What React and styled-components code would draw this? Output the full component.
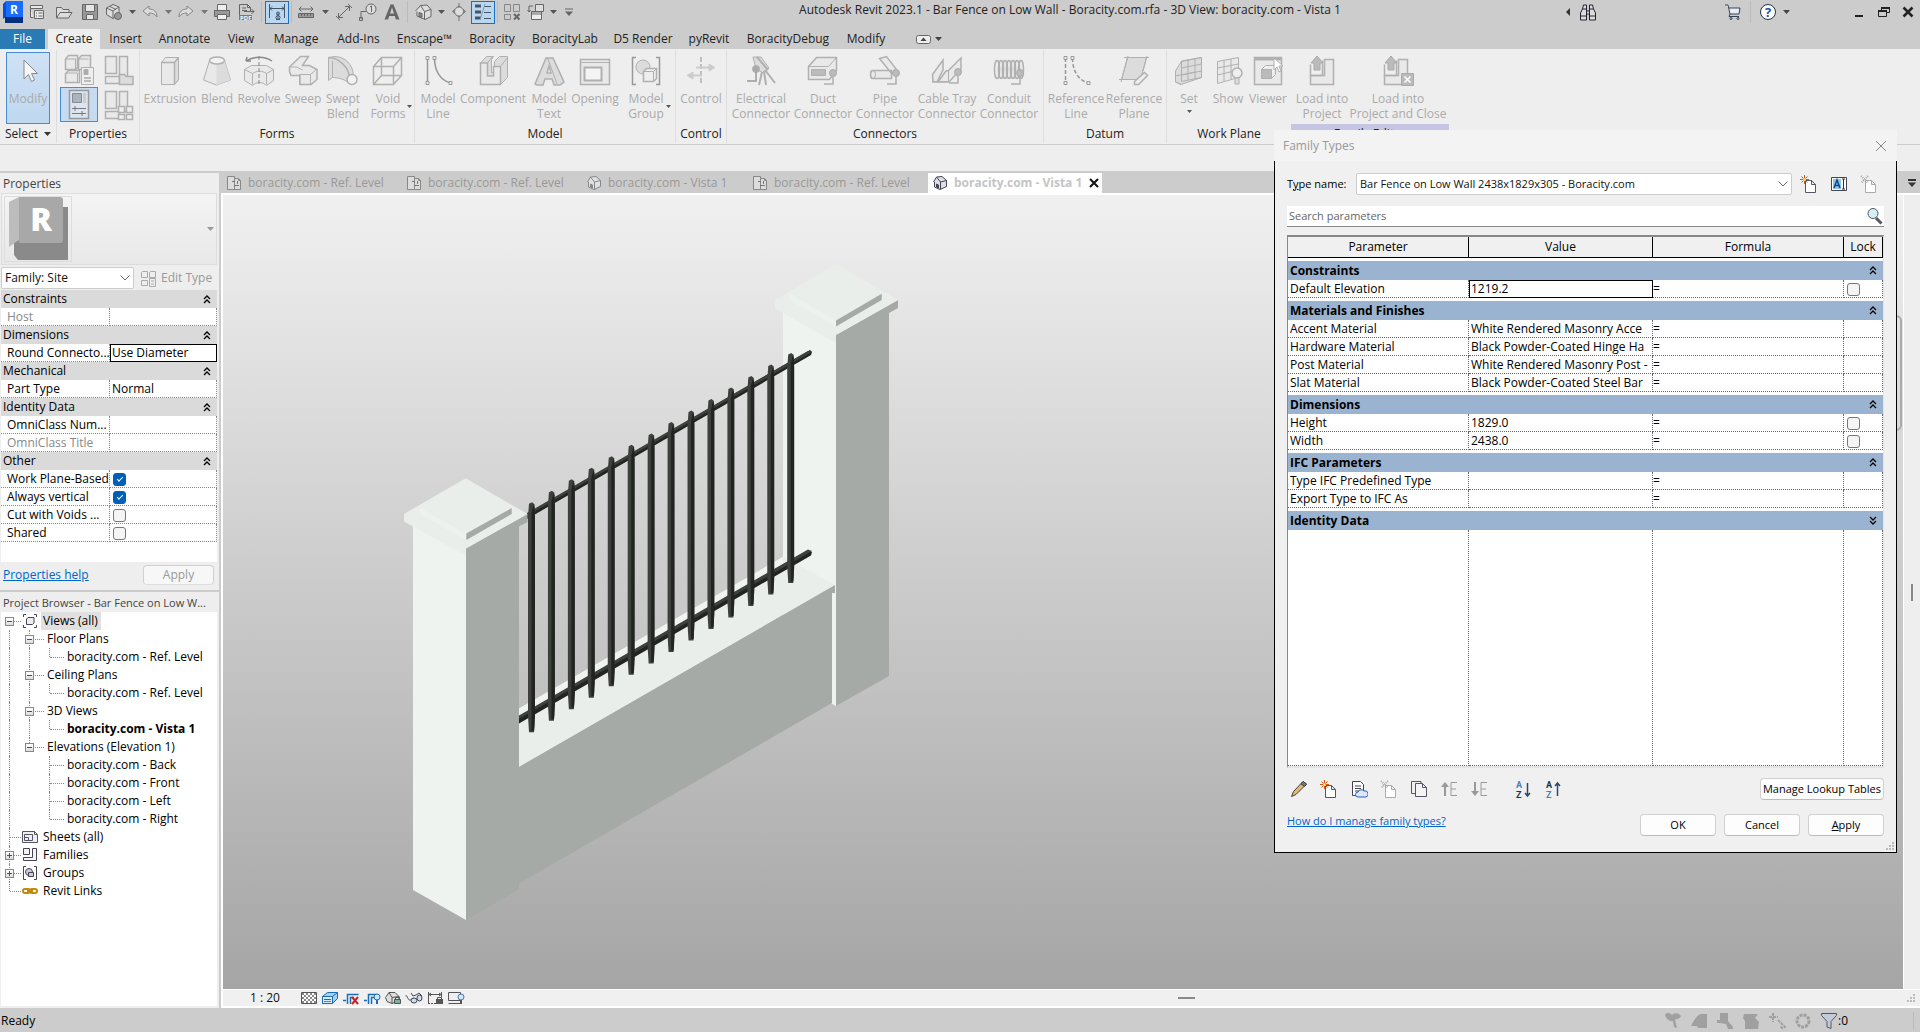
import React from "react";
import styled, { createGlobalStyle, css } from "styled-components";

const UI = '"Open Sans", "Noto Sans", sans-serif';

const GlobalStyle = createGlobalStyle`
  *, *::before, *::after { box-sizing: border-box; }
  body { margin: 0; background: #ccc; font: 12px/18px ${UI}; color: #222; overflow: hidden; }
  button, input, select { font: inherit; color: inherit; margin: 0; }
  svg { display: block; flex: none; }
`;

/* ---------- shell ---------- */
const Shell = styled.div`
  position: relative;
  display: flex;
  flex-direction: column;
  height: 100vh;
`;

const Svg = ({ s = 18, w, h, vb, children, ...rest }) => (
  <svg width={w || s} height={h || s} viewBox={vb || `0 0 ${w || s} ${h || s}`} fill="none" stroke="#666" strokeWidth="1" aria-hidden="true" {...rest}>
    {children}
  </svg>
);

const Caret = ({ color = "#555" }) => (
  <Svg w={7} h={4} stroke="none"><path d="M0 0h7L3.5 4z" fill={color} /></Svg>
);

/* ---------- title bar ---------- */
const TitleBar = styled.header`
  display: flex;
  height: 29px;
  background: #ccc;
`;
const Quick = styled.div`
  display: flex;
  align-items: center;
  height: 24px;
  padding-left: 2px;
`;
const QuickButton = styled.button`
  display: flex;
  align-items: center;
  justify-content: center;
  width: ${(p) => p.$w || 24}px;
  height: 23px;
  padding: 0;
  border: ${(p) => (p.$on ? "1px solid #1a6fc0" : "0")};
  background: ${(p) => (p.$on ? "#b9d7f1" : "none")};
`;
const Rule = styled.span`
  width: 1px;
  height: 22px;
  margin: 0 ${(p) => p.$m || 2}px;
  background: #bbb;
`;
const Title = styled.h1`
  flex: 1;
  margin: 0;
  padding-top: 1px;
  font-size: 12px;
  font-weight: 400;
  line-height: 18px;
  text-align: center;
  white-space: nowrap;
`;
const WindowTools = styled(Quick)`
  justify-content: flex-end;
`;
const Space = styled.span`
  width: ${(p) => p.$w}px;
`;

const quick = [
  { n: "Revit", w: 22, d: <Svg w={21} h={23}><path d="M3 0h17v22H3z" fill="#1a6cff" stroke="none" /><path d="M0 3l3-3v16l-3 2z" fill="#0b4fd0" stroke="none" /><path d="M2 16h18v6H2z" fill="#06307a" stroke="none" /><text x="11" y="13" textAnchor="middle" fill="#fff" stroke="none" fontFamily="Open Sans" fontWeight="700" fontSize="12">R</text></Svg> },
  { n: "Home", w: 26, d: <Svg s={16}><path d="M1.500 1.500h12v3h-12zM1.500 4.500v9h3M5.500 6.500h9v8h-9z" fill="#e8e8e8" /><path d="M7 9h1M9.500 9h4M7 12h1M9.500 12h4" /></Svg> },
  { n: "Open", w: 28, d: <Svg s={18}><path d="M1.500 15V4.500h5l1.500 2h6v3M1.500 15L5 9.500h12L13.500 15z" fill="#ddd" /></Svg> },
  { n: "Save", w: 24, d: <Svg s={18}><path d="M1.500 1.500h15v15h-15z" fill="#999" /><path d="M4.500 1.500h9v7h-9zM5.500 11.500h7v5h-7z" fill="#e6e6e6" /></Svg> },
  { n: "Synchronize", w: 24, d: <Svg s={18}><path d="M1.500 5L8 1.500l6 2.500v8L8 15.500l-6.500-4z" fill="#ddd" /><path d="M1.500 5L8 8v7.500M8 8l6-4M5 3.500l6 3" /><circle cx="13" cy="13" r="3.500" fill="#999" /></Svg> },
  { n: "Synchronize options", w: 12, d: <Caret /> },
  { n: "Undo", w: 24, d: <Svg s={18}><path d="M2 8l6-5v3c5 0 8 3 8 8-2-3-4-4-8-4v3z" fill="#ddd" stroke="#888" /></Svg> },
  { n: "Undo list", w: 12, d: <Caret color="#777" /> },
  { n: "Redo", w: 24, d: <Svg s={18}><path d="M16 8l-6-5v3c-5 0-8 3-8 8 2-3 4-4 8-4v3z" fill="#ddd" stroke="#888" /></Svg> },
  { n: "Redo list", w: 12, d: <Caret color="#777" /> },
  { n: "Print", w: 24, d: <Svg s={18}><path d="M4.500 7V1.500h9V7" fill="#eee" /><path d="M1.500 7.500h15v6h-15z" fill="#999" /><path d="M4.500 11.500h9v5h-9z" fill="#eee" /></Svg> },
  { n: "Export PDF", w: 24, d: <Svg s={18}><path d="M2.500 16.500v-15h8l3 3v4M10.500 1.500v3h3M5 5h4M5 7.500h5" /><path d="M7 8.500h10M14.500 6l2.500 2.500L14.500 11" /><path d="M2 12h13v5H2z" fill="#777" stroke="none" /><text x="3" y="17" fontSize="6" fill="#fff" stroke="none" fontFamily="Open Sans" fontWeight="700">PDF</text></Svg> },
  { rule: 3 },
  { n: "Aligned dimension", on: 1, d: <Svg s={18} stroke="#456"><path d="M1.500 1v14M16.500 1v14M2 5.500h14M4 3.500L2 5.500l2 2M14 3.500l2 2-2 2" /><path d="M10 9.500v7M8 16.500h4" /><circle cx="10" cy="10.500" r="1.500" /><circle cx="10" cy="14.500" r="2" /></Svg> },
  { rule: 2 },
  { n: "Measure", w: 24, d: <Svg s={18}><path d="M2 6h14M4.500 3.500L2 6l2.500 2.500M13.500 3.500L16 6l-2.500 2.500" /><path d="M1.500 10.500h15v4h-15z" fill="#999" /><path d="M4.500 11v2M7.500 11v2M10.500 11v2M13.500 11v2" /></Svg> },
  { n: "Measure options", w: 14, d: <Caret /> },
  { n: "Dimension", w: 24, d: <Svg s={18}><path d="M4 14L14 4M3.500 10v4.500H8M10 3.500h4.500V8M1 13l4 4M13 1l4 4" /></Svg> },
  { n: "Tag", w: 24, d: <Svg s={18}><circle cx="12" cy="6" r="5" fill="#ddd" /><path d="M2 16V8.500h5M0.500 14.500h3v3h-3zM11 4l1.500-1v6" /></Svg> },
  { n: "Text", w: 24, d: <Svg s={18}><path d="M1.500 16.500L7.500 1.500h3l6 15h-3.500l-1.200-3.500H6.200L5 16.500zM7 10.500h4L9 4.500z" fill="#666" stroke="none" fillRule="evenodd" /></Svg> },
  { rule: 3 },
  { n: "3D view", w: 24, d: <Svg s={18}><path d="M1.500 8l5-5.500L13 2l4 4.500v7l-6 3-8-3.500V8.500" fill="#ddd" /><path d="M6.500 2.500l4 6v8M10.500 8.500L17 6.500" /><path d="M5 9.500l3 1v4l-3-1z" fill="#888" /></Svg> },
  { n: "3D view options", w: 12, d: <Caret /> },
  { n: "Section", w: 24, d: <Svg s={18}><path d="M9 0v18M2.500 8.500L9 3l6.500 5.500L9 14z" fill="#888" stroke="#777" /><circle cx="9" cy="8.500" r="4.500" fill="#ddd" stroke="#777" /></Svg> },
  { n: "Thin lines", on: 1, d: <Svg s={18} stroke="#456"><path d="M1 3h6M1 9h6M1 15h6" strokeWidth="3" /><path d="M10 3.500h7M10 9.500h7M10 15.500h7" /><path d="M11 1L6 17" stroke="#89a" /></Svg> },
  { rule: 2 },
  { n: "Close inactive", w: 24, d: <Svg s={18} stroke="#888"><path d="M1.500 1.500h6v7h-6zM10.500 1.500h6v7h-6zM1.500 11.500h6v5h-6z" /><path d="M11 11l5.500 5.500M16.500 11L11 16.500" stroke="#666" strokeWidth="2" /></Svg> },
  { n: "Switch windows", w: 24, d: <Svg s={18}><path d="M8.500 1.500h8v7h-8z" fill="#ddd" /><path d="M4.500 8.500h10v8h-10z" fill="#eee" /><path d="M4.500 9h10v2h-10zM6 3H2v6M0.500 7L2 9l1.500-2" /></Svg> },
  { n: "Switch options", w: 10, d: <Caret /> },
  { n: "Customize", w: 22, d: <Svg w={8} h={8}><path d="M0 1h8" /><path d="M0 3.500h8L4 8z" fill="#666" stroke="none" /></Svg> },
];

/* ---------- ribbon tabs ---------- */
const TabBar = styled.nav`
  display: flex;
  height: 20px;
  background: #ccc;
`;
const Tab = styled.button`
  width: ${(p) => p.$w}px;
  height: 20px;
  padding: 0;
  border: 0;
  line-height: 20px;
  white-space: nowrap;
  margin-right: ${(p) => (p.$file ? 3 : 0)}px;
  color: ${(p) => (p.$file ? "#fff" : "#222")};
  background: ${(p) => (p.$file ? "#2a7ab5" : p.$active ? "#eee" : "none")};
`;
const CollapseButton = styled.button`
  display: flex;
  align-items: center;
  gap: 4px;
  margin-left: 22px;
  padding: 0;
  border: 0;
  background: none;
`;
const tabs = [["File", 45], ["Create", 52], ["Insert", 51], ["Annotate", 67], ["View", 46], ["Manage", 64], ["Add-Ins", 61], ["Enscape™", 71], ["Boracity", 64], ["BoracityLab", 82], ["D5 Render", 74], ["pyRevit", 58], ["BoracityDebug", 100], ["Modify", 56]];

/* ---------- ribbon ---------- */
const Ribbon = styled.section`
  display: flex;
  height: 96px;
  background: #eee;
  border-bottom: 1px solid #ccc;
`;
const Panel = styled.div`
  display: flex;
  flex-direction: column;
  justify-content: space-between;
  margin: 1px 0;
  padding: 2px ${(p) => p.$pad || 3}px 0;
  border-right: ${(p) => (p.$last ? 0 : 1)}px solid #ddd;
`;
const PanelBody = styled.div`
  display: flex;
`;
const PanelTitle = styled.div`
  display: flex;
  align-items: center;
  justify-content: center;
  gap: 6px;
  height: 19px;
  margin: 0 -3px;
  background: ${(p) => (p.$accent ? "#c6c6e4" : "none")};
`;
const Tool = styled.button`
  position: relative;
  display: flex;
  flex-direction: column;
  align-items: center;
  width: ${(p) => p.$w}px;
  height: 72px;
  padding: 2px 0 0;
  border: 1px solid ${(p) => (p.$on ? "#4a8cd0" : "transparent")};
  background: ${(p) => (p.$on ? "linear-gradient(#cfe1f4, #bfd8f0)" : "none")};
  color: #aaa;
  line-height: 15px;
  white-space: nowrap;
  svg { margin-bottom: 4px; }
`;
const ToolCaret = styled.span`
  position: absolute;
  right: 0;
  bottom: 11px;
`;
const BelowCaret = styled.span`
  padding-top: 4px;
`;
const SmallGrid = styled.div`
  display: grid;
  grid-template-columns: 38px 36px;
  gap: 0 2px;
`;
const SmallTool = styled.button`
  display: flex;
  align-items: center;
  justify-content: center;
  height: 35px;
  padding: 0;
  border: 1px solid ${(p) => (p.$on ? "#4a8cd0" : "transparent")};
  background: ${(p) => (p.$on ? "#c5dbf1" : "none")};
`;

const R = ({ children }) => <Svg s={32} stroke="#b0b0b0">{children}</Svg>;
const L = "#e9e9e9";
const D = "#dcdcdc";
const knob = (x, y) => <><circle cx={x} cy={y} r="3.500" fill="#bbb" stroke="#aaa" /><path d={`M${x} ${y + 3}v8h-9`} strokeWidth="1.500" /></>;
const sheet = <><path d="M3.500 2.500h11v17h-11zM17.500 2.500h8v20h-8zM3.500 22.500h14v7h-14z" fill={L} strokeWidth="1.500" /></>;

const icons = {
  modify: <R><path d="M12 5v19l4.500-4.500 3 7 3-1.500-3-6.500h6z" fill="#f7f7f7" stroke="#888" /></R>,
  extrusion: <R><path d="M7.500 7.500l4-5h13v22l-4 5h-13z" fill={L} /><path d="M20.500 7.500l4-5v22l-4 5z" fill={D} /><path d="M7.500 7.500h13v22M20.500 7.500l4-5" strokeWidth="1.500" /></R>,
  blend: <R><path d="M8.500 5.500L2.500 25l13 5 14-5-6-19.500z" fill={L} /><path d="M15.500 9v21l14-5-6-19.500z" fill={D} stroke="none" /><ellipse cx="16" cy="5.500" rx="7.500" ry="3.500" fill="#f2f2f2" strokeWidth="1.500" /></R>,
  revolve: <R><path d="M1.500 14.500l7-4h15l7 4v11l-7 5c-4-4-10-4-14 0l-8-5z" fill={L} /><path d="M1.500 14.500l8 4c4-3 10-3 14 0l7-4M9.500 18.500v11M23.500 18.500v11" /><path d="M16 1v29" strokeDasharray="4 2" stroke="#888" /><path d="M3 6c7-5 19-5 26 0M3 6l1-4M3 6h5" strokeWidth="1.500" stroke="#888" /></R>,
  sweep: <R><path d="M2.500 12L13.500 1.500h8l-6 9h7l7.500 4v10l-6 5h-11v-9h-9l-1.500-4z" fill={L} strokeWidth="1.500" /><path d="M2.500 12h7l6 3M12.500 19.500h11v10h-11zM23.500 19.500l6-5" /></R>,
  swept: <R><path d="M1.500 2.500v23l4-3c6 0 13 2 17 6l4-3V21C26 9 18 2 8 1.500z" fill={D} /><path d="M1.500 2.500c10 0 21 10 21 21" strokeWidth="1.500" /><path d="M5.500 22.500V6" /><circle cx="25" cy="24.500" r="5" fill="#f2f2f2" strokeWidth="1.500" /></R>,
  void: <R><path d="M1.500 11.500h20v18h-20zM9.500 2.500h20v18h-20zM1.500 11.500l8-9M21.500 11.500l8-9M21.500 29.500l8-9M1.500 29.500l8-9" strokeWidth="1.500" /></R>,
  mline: <R><path d="M5.500 3v26M12.500 3c0 12 5 22 16 25" strokeWidth="1.500" stroke="#999" /><path d="M4 1.500h3v3H4zM4 26.500h3v3H4zM11 1.500h3v3h-3zM27 26.500h3v3h-3z" fill="#eee" stroke="#999" /></R>,
  component: <R><path d="M3.500 8l6-6.500h7l-2 3v13h3v-11l5-5h8v21l-7 7h-20z" fill={D} /><path d="M3.500 8h7v13h6v-9.500h7v18h-20z" fill={L} strokeWidth="1.500" /><path d="M10.500 8l5-6.500M23.500 11.500l7-9M14.500 4.500v13" /></R>,
  mtext: <R><path d="M2 29L13 3h7l11 24-4 3h-6l-2-6h-7l-2 6H4zM14 18h4l-2-7z" fill={D} strokeWidth="1.500" fillRule="evenodd" /><path d="M13 3l2 1 9 25" /></R>,
  opening: <R><path d="M1.500 4.500h29v25h-29z" fill={L} strokeWidth="1.500" /><path d="M1.500 7.500h29" /><path d="M5.500 12.500h17v13h-17z" fill="#f4f4f4" strokeWidth="2" /></R>,
  group: <R><path d="M6 2.500H2.500v27H6M26 2.500h3.500v27H26" strokeWidth="1.500" stroke="#999" /><circle cx="13" cy="12" r="7" fill={D} /><path d="M13.500 16.500l3-3h10v10l-3 3h-10z" fill="#eee" strokeWidth="1.500" /><path d="M13.500 16.500h10v10M23.500 16.500l3-3" /></R>,
  control: <R><path d="M16 2v28" strokeDasharray="5 2" strokeWidth="1.500" /><path d="M11 12.500h15M4 20.500h13" strokeWidth="2" stroke="#ccc" /><path d="M24 9l6 3.500-6 3.500zM8 17l-6 3.500L8 24z" fill="#ccc" stroke="#ccc" /></R>,
  electrical: <R><path d="M8 2h8l8 11-6 5-7-4z" fill={D} /><path d="M12 2l11 13M17 17l-3 13M19 16l2 14M20 15l10 13" strokeWidth="2" /><circle cx="11" cy="14" r="3.500" fill="#aaa" /><path d="M11 17v9H2" strokeWidth="1.500" stroke="#999" /></R>,
  duct: <R><path d="M1.500 11.500l8-9h20v13l-7 9h-21z" fill={L} strokeWidth="1.500" /><path d="M1.500 11.500h20l8-9" /><path d="M4.500 14.500h14v6h-14z" fill="#bbb" />{knob(26, 18)}</R>,
  pipe: <R><path d="M3.500 15.500h19v8h-19a2 4 0 010-8zM10.500 3.500l7-2 10 13-5 4z" fill={L} strokeWidth="1.500" /><ellipse cx="4" cy="19.500" rx="2.500" ry="4" />{knob(27, 18)}</R>,
  tray: <R><path d="M1.500 19.500L12 5v10l-6 12h-4zM17.500 15.500L30 3v11L18 27H7l8-11z" fill={L} strokeWidth="1.500" /><path d="M1.500 19.500v7h16v-11" />{knob(27, 17)}</R>,
  conduit: <R><path d="M4.500 5.500h24v18h-24z" fill={L} stroke="none" />{[4, 8, 12, 16, 20, 24, 28].map((x) => <ellipse key={x} cx={x} cy="14.500" rx="2.500" ry="9" strokeWidth="1.500" />)}{knob(27, 18)}</R>,
  rline: <R><path d="M5.500 3v26M12.500 3c0 12 5 22 16 25" strokeWidth="1.500" stroke="#999" strokeDasharray="4 2" /><path d="M4 1.500h3v3H4zM4 26.500h3v3H4zM11 1.500h3v3h-3zM27 26.500h3v3h-3z" fill="#eee" stroke="#999" /></R>,
  rplane: <R><path d="M9.500 2.500h19l-6 22h-19z" fill={D} /><path d="M6 2.500h25M1 24.500h16M10 1L3 27M29 1l-4 15" /><path d="M16.500 26.500l10-9 3 3-9 9h-4z" fill="#eee" strokeWidth="1.500" /></R>,
  set: <R><path d="M2.500 16l6-10 20-3.500v20L8 29.500 2.500 27z" fill={D} /><path d="M8.500 6.500v20l20-4v-20zM15 5v20M22 4v20M8.500 13l20-4M8.500 20l20-4M2.500 16v11l6 2.500M2.500 21l20-4" /></R>,
  show: <R><path d="M5.500 6.500l21-4v20l-21 6zM12 5v21M19 4v20M5.500 13l21-4M5.500 20l21-5" fill={L} /><circle cx="25" cy="18" r="5" fill="#eee" strokeWidth="1.500" /><path d="M23 23h4v6h-4z" fill={D} /></R>,
  viewer: <R><path d="M2.500 2.500h27v27h-27z" fill={L} strokeWidth="1.500" /><path d="M3 4h26" strokeWidth="3" /><path d="M9.500 14.500l4-4h10v9l-4 4h-10z" fill="#eee" /><path d="M9.500 14.500h10v9h-10z" fill="#bbb" /><path d="M22 3v12l3-3 2 5 2-1-2-5h4z" fill="#fff" /></R>,
  load: <R><path d="M4.500 20.500h14v-16h9v25h-23z" fill={L} strokeWidth="1.500" /><path d="M4.500 9.500v11h12v-15" strokeWidth="1.500" /><path d="M11 1l6 7h-3v7H8V8H5z" fill="#bbb" stroke="#aaa" /></R>,
  loadclose: <R><path d="M2.500 20.500h14v-16h9v25h-23z" fill={L} strokeWidth="1.500" /><path d="M2.500 9.500v11h12v-15" strokeWidth="1.500" /><path d="M9 1l6 7h-3v7H6V8H3z" fill="#bbb" stroke="#aaa" /><path d="M19.500 18.500h12v12h-12z" fill="#bbb" stroke="#aaa" /><path d="M22.500 21.500l6 6M28.500 21.500l-6 6" stroke="#fff" strokeWidth="1.500" /></R>,
  types: <R><path d="M2.500 5l3-3.500h9v12l-2 2h-10zM15.500 5l3-3.500h9v12l-2 2h-10zM2.500 20l3-3.500h11v12h-14z" fill={L} strokeWidth="1.500" /><path d="M2.500 5h10v10M15.500 5h10M2.500 19h12v10" /><path d="M18.500 13.500h12v17h-12z" fill="#eee" /><path d="M21 15.500h4v5h-4z" fill="#aaa" /><path d="M21 24h7M21 27h7" stroke="#888" /></R>,
  category: <R>{sheet}<path d="M17.500 20.500h5l1.500 2h7v8H17.500z" fill={D} strokeWidth="1.500" /></R>,
  props: <R><path d="M6.500 1.500h19v28h-19z" fill="#dde6ef" stroke="#999" strokeWidth="1.500" /><path d="M9.500 4.500h9v9h-9z" fill="#aab4be" stroke="#889" /><path d="M20 4h3v10h-3z" fill="#ccc" stroke="none" /><path d="M9 19.500h14M12 17v5M9 24.500h14M19 22v5" stroke="#778" /></R>,
  ftypes: <R>{sheet}<path d="M16.500 17.500h6v6h-6zM24.500 17.500h6v6h-6zM16.500 25.500h6v5h-6zM24.500 25.500h6v5h-6z" fill="#eee" strokeWidth="1.500" /></R>,
};

const panels = [
  { t: "Forms", pad: 1, tools: [["extrusion", 58, "Extrusion"], ["blend", 36, "Blend"], ["revolve", 48, "Revolve"], ["sweep", 40, "Sweep"], ["swept", 40, "Swept", "Blend"], ["void", 50, "Void", "Forms", 1]] },
  { t: "Model", tools: [["mline", 40, "Model", "Line"], ["component", 70, "Component"], ["mtext", 42, "Model", "Text"], ["opening", 50, "Opening"], ["group", 52, "Model", "Group", 1]] },
  { t: "Control", pad: 1, tools: [["control", 48, "Control"]] },
  { t: "Connectors", tools: [["electrical", 62, "Electrical", "Connector"], ["duct", 62, "Duct", "Connector"], ["pipe", 62, "Pipe", "Connector"], ["tray", 62, "Cable Tray", "Connector"], ["conduit", 62, "Conduit", "Connector"]] },
  { t: "Datum", tools: [["rline", 58, "Reference", "Line"], ["rplane", 58, "Reference", "Plane"]] },
  { t: "Work Plane", tools: [["set", 38, "Set", null, 2], ["show", 40, "Show"], ["viewer", 40, "Viewer"]], last: 1 },
  { t: "Family Editor", accent: 1, tools: [["load", 56, "Load into", "Project"], ["loadclose", 96, "Load into", "Project and Close"]], last: 1 },
];

const OptionsBar = styled.div`
  height: 26px;
  background: #eee;
`;

/* ---------- workspace ---------- */
const Workspace = styled.main`
  display: flex;
  flex: 1;
  min-height: 0;
  border-top: 1px solid #ccc;
  background: #ccc;
`;
const Side = styled.aside`
  display: flex;
  flex-direction: column;
  width: 219px;
  padding-top: 1px;
`;
const Palette = styled.section`
  display: flex;
  flex-direction: column;
  padding: 0 2px 0 1px;
  background: #eee;
  ${(p) => p.$grow && css`flex: 1; margin-top: 2px; padding-bottom: 2px;`}
`;
const PaletteTitle = styled.h2`
  margin: 0;
  padding: 2px 0 0 2px;
  font-size: ${(p) => (p.$compact ? 11 : 12)}px;
  font-weight: 400;
  line-height: 18px;
  white-space: nowrap;
  color: #444;
`;
const TypeBox = styled.div`
  display: flex;
  align-items: center;
  justify-content: space-between;
  height: 72px;
  padding: 0 2px;
  border: 1px solid #ddd;
  background: linear-gradient(#f4f4f4, #e8e8e8);
`;
const Thumb = styled.div`
  padding: 0 1px;
  border: 1px solid #ddd;
`;
const FilterRow = styled.div`
  display: flex;
  align-items: center;
  gap: 6px;
  padding: 2px 0 1px;
`;
const SelectWrap = styled.div`
  position: relative;
  width: ${(p) => (p.$w ? `${p.$w}px` : "auto")};
  flex: ${(p) => (p.$w ? "none" : 1)};
`;
const Select = styled.select`
  appearance: none;
  display: block;
  width: 100%;
  height: 22px;
  padding: 0 24px 0 ${(p) => p.$pad || 3}px;
  border: 1px solid #ccc;
  border-radius: 2px;
  background: #fff;
  color: #111;
`;
const Chevron = styled.span`
  position: absolute;
  right: 4px;
  top: 8px;
  pointer-events: none;
`;
const EditType = styled.button`
  display: flex;
  align-items: center;
  gap: 4px;
  padding: 0;
  border: 0;
  background: none;
  color: #999;
`;
const Grid = styled.table`
  width: 100%;
  table-layout: fixed;
  border-collapse: separate;
  border-spacing: 0;
  background: #fff;
  color: #000;
`;
const Col = styled.col`
  width: ${(p) => (p.$w ? `${p.$w}px` : "auto")};
`;
const GroupHead = styled.th`
  height: 18px;
  padding: 0 6px 0 2px;
  background: #dadada;
  font-weight: 400;
  line-height: 18px;
  text-align: left;
`;
const GroupBar = styled.div`
  display: flex;
  align-items: center;
  justify-content: space-between;
`;
const PropCell = styled.td`
  height: 18px;
  padding: 0 0 0 ${(p) => (p.$value ? 2 : 6)}px;
  border-right: 1px dotted #888;
  border-bottom: 1px dotted #888;
  line-height: 17px;
  white-space: nowrap;
  color: ${(p) => (p.$dim ? "#888" : "#000")};
  ${(p) => p.$focus && css`outline: 1px solid #000; outline-offset: -1px;`}
`;
const Check = styled.input`
  appearance: none;
  position: relative;
  display: block;
  width: 13px;
  height: 13px;
  margin: 2px 0 0 1px;
  border: 1px solid #777;
  border-radius: 3px;
  background: #f5f5f5;
  &:checked { background: #005fb8; border-color: #005fb8; }
  &:checked::after {
    content: "";
    position: absolute;
    left: 3px;
    top: 3px;
    width: 6px;
    height: 3px;
    border-left: 1px solid #fff;
    border-bottom: 1px solid #fff;
    transform: rotate(-45deg);
  }
`;
const PaletteFoot = styled.div`
  display: flex;
  align-items: center;
  justify-content: space-between;
  height: 28px;
  padding: 0 3px 2px 2px;
`;
const HelpLink = styled.a`
  color: #0066cc;
  line-height: 14px;
  text-decoration: underline;
`;
const Filler = styled.div`
  height: 20px;
  background: #fff;
`;
const PushButton = styled.button`
  width: ${(p) => p.$w || 76}px;
  height: ${(p) => p.$h || 22}px;
  padding: 0;
  border: 1px solid #d0d0d0;
  border-bottom-color: ${(p) => (p.disabled ? "#ddd" : "#bbb")};
  border-radius: 4px;
  background: ${(p) => (p.disabled ? "#f7f7f7" : "#fdfdfd")};
  color: ${(p) => (p.disabled ? "#999" : "#000")};
  white-space: nowrap;
`;

const Fold = ({ down }) => (
  <Svg w={8} h={9} stroke="#000" strokeWidth="1.300">
    {down ? <path d="M1 1l3 3 3-3M1 5l3 3 3-3" /> : <path d="M1 4l3-3 3 3M1 8l3-3 3 3" />}
  </Svg>
);
const Down = () => <Svg w={10} h={6} stroke="#666"><path d="M.5.5L5 5 9.500.5" /></Svg>;

const properties = [
  ["Constraints", [["Host", "", { dim: 1 }]]],
  ["Dimensions", [["Round Connecto...", "Use Diameter", { focus: 1 }]]],
  ["Mechanical", [["Part Type", "Normal", {}]]],
  ["Identity Data", [["OmniClass Num...", "", {}], ["OmniClass Title", "", { dim: 1 }]]],
  ["Other", [["Work Plane-Based", true, {}], ["Always vertical", true, {}], ["Cut with Voids ...", false, {}], ["Shared", false, {}]]],
];

/* ---------- tree ---------- */
const Tree = styled.ul`
  flex: 1;
  margin: 0;
  padding: 0;
  list-style: none;
  background: #fff;
  color: #000;
`;
const Node = styled.li`
  display: flex;
  align-items: center;
  height: 18px;
  white-space: nowrap;
  font-weight: ${(p) => (p.$bold ? 700 : 400)};
`;
const Branch = styled.span`
  position: relative;
  display: flex;
  align-items: center;
  justify-content: center;
  flex: none;
  width: 20px;
  height: 18px;
  padding-right: 3px;
  &::before {
    content: "";
    position: absolute;
    left: 8px;
    top: 0;
    height: ${(p) => (p.$kind.includes("end") ? 9 : 18)}px;
    border-left: ${(p) => (p.$kind.includes("none") ? 0 : 1)}px dotted #888;
  }
  &::after {
    content: "";
    position: absolute;
    left: 9px;
    top: 9px;
    width: ${(p) => (p.$short ? 11 : 14)}px;
    border-top: ${(p) => (p.$kind.includes("stub") ? 1 : 0)}px dotted #888;
  }
`;
const Expander = styled.button`
  position: relative;
  z-index: 1;
  width: 9px;
  height: 9px;
  padding: 0;
  border: 1px solid #888;
  background: linear-gradient(#fff, #ddd);
  &::before, &::after {
    content: "";
    position: absolute;
    background: #3050a0;
  }
  &::before { left: 1px; top: 3px; width: 5px; height: 1px; }
  &::after { left: 3px; top: 1px; width: 1px; height: ${(p) => (p.$plus ? 5 : 0)}px; }
`;
const NodeIcon = styled.span`
  width: 20px;
  padding-left: 1px;
`;
const NodeLabel = styled.span`
  padding: 0 3px 0 ${(p) => (p.$deep ? 6 : 2)}px;
  background: ${(p) => (p.$sel ? "#e0e0e0" : "none")};
`;
const ti = {
  views: <Svg s={16} stroke="#445"><path d="M4 1.500H1.500V4M12 1.500h2.500V4M4 14.500H1.500V12M12 14.500h2.500V12" /><path d="M4.500 6l1.500-1.500h6V10l-1.500 1.500h-6z" fill="#eee" /></Svg>,
  sheets: <Svg s={16} stroke="#556"><path d="M.5 2.500h12l3 3v8H.5zM12.500 2.500v3h3" fill="#eee" /><path d="M2.500 5.500h8v6h-8zM2.500 8.500h4v3" /></Svg>,
  families: <Svg s={16} stroke="#445"><path d="M1.500 1.500h6v6h-6zM10.500 1.500h4v12h-13v-3h9z" fill="#f4f4f4" /></Svg>,
  groups: <Svg s={16} stroke="#445"><path d="M4 1.500H1.500v13H4M12 1.500h2.500v13H12" /><circle cx="7" cy="7" r="3.500" fill="#ccd" /><path d="M6.500 7.500h5v4h-5z" fill="#ccd" /></Svg>,
  links: <Svg s={16} stroke="#c08a10" strokeWidth="2"><rect x="1" y="6" width="7" height="4" rx="2" /><rect x="8" y="6" width="7" height="4" rx="2" /><path d="M5 8h6" /></Svg>,
};
const tree = [
  { c: ["nonestub-"], i: "views", t: "Views (all)", sel: 1 },
  { c: ["line", "stub-"], t: "Floor Plans" },
  { c: ["line", "line", "endstub"], t: "boracity.com - Ref. Level" },
  { c: ["line", "stub-"], t: "Ceiling Plans" },
  { c: ["line", "line", "endstub"], t: "boracity.com - Ref. Level" },
  { c: ["line", "stub-"], t: "3D Views" },
  { c: ["line", "line", "endstub"], t: "boracity.com - Vista 1", bold: 1 },
  { c: ["line", "endstub-"], t: "Elevations (Elevation 1)" },
  { c: ["line", "none", "stub"], t: "boracity.com - Back" },
  { c: ["line", "none", "stub"], t: "boracity.com - Front" },
  { c: ["line", "none", "stub"], t: "boracity.com - Left" },
  { c: ["line", "none", "endstub"], t: "boracity.com - Right" },
  { c: ["stub"], i: "sheets", t: "Sheets (all)" },
  { c: ["stub+"], i: "families", t: "Families" },
  { c: ["stub+"], i: "groups", t: "Groups" },
  { c: ["endstub"], i: "links", t: "Revit Links" },
];

/* ---------- view area ---------- */
const ViewArea = styled.div`
  display: flex;
  flex-direction: column;
  flex: 1;
  min-width: 0;
  margin-left: 2px;
`;
const DocTabs = styled.div`
  display: flex;
  align-items: flex-end;
  height: 21px;
  padding: 0 4px 0 1px;
`;
const DocTab = styled.button`
  display: flex;
  align-items: center;
  gap: 6px;
  width: ${(p) => p.$w}px;
  height: 20px;
  padding: 0 4px;
  border: 0;
  white-space: nowrap;
  text-align: left;
  background: ${(p) => (p.$active ? "#fff" : "none")};
  color: ${(p) => (p.$active ? "#c4c4c4" : "#999")};
  font-weight: ${(p) => (p.$active ? 700 : 400)};
`;
const TabMenu = styled.button`
  display: flex;
  margin: 0 0 6px auto;
  padding: 0;
  border: 0;
  background: none;
`;
const ViewFrame = styled.div`
  display: flex;
  flex: 1;
  min-height: 0;
  border: solid #fff;
  border-width: 2px 0 1px 2px;
`;
const Canvas = styled.div`
  position: relative;
  flex: 1;
  min-width: 0;
  padding: 60px 0 0 177px;
  overflow: hidden;
  background: linear-gradient(#f0f0f0, #a5a5a5);
`;
const NavBar = styled.div`
  position: absolute;
  top: 120px;
  right: 1px;
  width: 32px;
  height: 116px;
  border: 2px solid #aaa;
  border-radius: 6px;
`;
const Gutter = styled.div`
  display: flex;
  align-items: center;
  justify-content: center;
  width: 17px;
  background: #eee;
  border-left: 1px solid #fff;
`;
const ViewBar = styled.div`
  display: flex;
  align-items: center;
  height: 16px;
  padding: 0 5px 0 27px;
  background: #f0f0f0;
  border-left: 2px solid #fff;
  color: #111;
`;
const Scale = styled.span`
  width: 50px;
`;
const ViewIcons = styled.div`
  display: flex;
  gap: 3px;
`;
const IconButton = styled.button`
  display: flex;
  align-items: center;
  justify-content: center;
  width: ${(p) => p.$w || 18}px;
  height: ${(p) => p.$h || 16}px;
  padding: 0;
  border: 0;
  background: none;
`;
const Splitter = styled.span`
  width: ${(p) => (p.$v ? 2 : 17)}px;
  height: ${(p) => (p.$v ? 17 : 2)}px;
  background: #888;
`;
const Push = styled.span`
  margin-left: auto;
`;
const ViewEnd = styled.div`
  height: 2px;
  background: #fff;
`;

const plan = <Svg s={16} stroke="#888"><path d="M1.500 1.500h7v13h-7z" fill="#ddd" /><path d="M8.500 3.500h4l2 2v9h-6zM12.500 3.500v2h2" fill="#ddd" /><path d="M6 6.500h3M11.500 6v3M8 10.500h5" stroke="#777" /></Svg>;
const house = (c) => <Svg s={16} stroke={c}><path d="M1.500 7l3-5L10 1.500l4.500 4v6L8 14.500 2.500 12V7" fill="#dde1e6" /><path d="M4.500 2l4 5v7.500M8.500 7l6-1.500" /><path d="M4.500 9l2 1v3l-2-1z" fill={c} /></Svg>;
const docs = [["boracity.com - Ref. Level", 180, plan], ["boracity.com - Ref. Level", 180, plan], ["boracity.com - Vista 1", 166, house("#888")], ["boracity.com - Ref. Level", 180, plan], ["boracity.com - Vista 1", 174, house("#445")]];

const bars = Array.from({ length: 14 }, (_, i) => ({ x: 528 + i * 19.94, y: 502.7 - i * 11.47 }));

const Fence = () => (
  <svg width="500" height="670" viewBox="400 255 500 670" role="img" aria-label="Bar fence on low wall">
    <path d="M783 310L836 341V706L783 676z" fill="#eef3ef" />
    <path d="M836 335L898 300V308L889 313V676L836 706z" fill="#a6aaa6" />
    <path d="M836 264L898 300L836 335V343L783 313L775 308V300z" fill="#eaeeea" />
    <path d="M789.500 293.500L836 320.500V326.500L789.500 300z" fill="#eef2ee" />
    <path d="M836 320.500L881.700 293.700V300L836 326.500z" fill="#a6aaa6" />
    <path d="M783 557L793 562L835 585L519 767V708.500z" fill="#eaeeea" />
    <path d="M783 557L519 708.500V716L783 564z" fill="#f0f4f0" />
    <path d="M519 767L835 585V593H832V703L519 883.500z" fill="#a6aaa6" />
    <path d="M832 593H836V706L832 703.500z" fill="#eef3ef" />
    <path d="M527 514L810 350L812 352L811 355L527 519z" fill="#222422" />
    <path d="M527 513L808 351L812 352L527 516z" fill="#3d403d" />
    <path d="M519 717L808 550L812 552L811 555.500L519 723.500z" fill="#222422" />
    <path d="M519 715.500L808 549.500L812 551L519 719z" fill="#3d403d" />
    {bars.map(({ x, y }) => (
      <g key={x}>
        <path d={`M${x} ${y + 14}l1-13 3-1.500 2.500 2v222l-.5 6h-5l-1-16z`} fill="#3d403d" />
        <path d={`M${x + 3.500} ${y + 10}l2-8 1 2 .5 10v200l-1 14h-2.500z`} fill="#222422" />
      </g>
    ))}
    <path d="M413 522L466 553V920L413 890z" fill="#eef3ef" />
    <path d="M466 548.500L527.500 514V522L519 526.500V889.500L466 920z" fill="#a6aaa6" />
    <path d="M465.700 478.300L527.500 514L466 548.500V556L413 526.500L404 521.500V514z" fill="#eaeeea" />
    <path d="M420 508L466.300 534V540L420 514z" fill="#eef2ee" />
    <path d="M466.300 533.500L511.700 508V514L466.300 540z" fill="#a6aaa6" />
  </svg>
);

const vIcons = [
  ["Detail level", <Svg w={18} h={14} stroke="#555"><path d="M1.500 1.500h15v11h-15z" fill="#fff" /><path d="M2 3h14M2 7h14M2 11h14" strokeDasharray="2 2" strokeWidth="2" stroke="#888" /><path d="M4 5h12M4 9h12" strokeDasharray="2 2" strokeWidth="2" stroke="#888" /></Svg>],
  ["Visual style", <Svg w={18} h={14} stroke="#1a6cb5"><path d="M1.500 5.500l5-4h10v6l-5 5h-10z" fill="#9fd0f5" /><path d="M1.500 5.500h10v7h-10zM11.500 5.500l5-4" fill="#d8edfb" /><path d="M3 8.500h7" stroke="#d22" /><path d="M3 10.500h7" stroke="#2b2" /></Svg>],
  ["Crop off", <Svg w={18} h={14} stroke="#1a6cb5"><path d="M5.500 13V3.500h11M8.500 13V6.500H12M1 9.500h3" strokeWidth="1.500" /><path d="M10 6l6 7M16 6l-6 7" stroke="#c22" strokeWidth="2" /></Svg>],
  ["Crop region", <Svg w={18} h={14} stroke="#1a6cb5"><path d="M5.500 13V3.500h8M8.500 13V6.500H12M1 9.500h3" strokeWidth="1.500" /><circle cx="14" cy="6" r="3" fill="#cfe8ff" /><path d="M14 9v4" strokeWidth="2" /></Svg>],
  ["Lock view", <Svg w={18} h={14} stroke="#555"><path d="M1.500 6.500L5 1.500h6l4 4v4L8 12.500l-5-2z" fill="#ddd" /><path d="M5 1.500l3 5v6M8 6.500l7-1" /><path d="M10.500 8.500h6v4h-6z" fill="#7ab0a0" /><path d="M11.500 8.500v-2h4v2" /></Svg>],
  ["Hide", <Svg w={18} h={14} stroke="#445"><path d="M.5 5c2-2 2 5 5 4l3-2M6 2l2 3 3-1 3-2 3 3" /><ellipse cx="9" cy="9.500" rx="3" ry="2.500" fill="#cde" /><ellipse cx="14.500" cy="7" rx="2.500" ry="3" fill="#cde" /></Svg>],
  ["Constraints", <Svg w={18} h={14} stroke="#555"><path d="M2.500 1v12M15.500 1v5M3 3.500h12M5 2L3 3.500 5 5M13 2l2 1.500L13 5" /><path d="M2 12.500h8" strokeDasharray="2 1" /><path d="M10 8h7v5h-7z" fill="#555" stroke="none" /><path d="M11.500 8V6.500h4V8" /></Svg>],
  ["Preview", <Svg w={18} h={14} stroke="#555"><path d="M1.500 1.500h12v8h-12zM1.500 12.500h12" fill="#eee" /><circle cx="14" cy="6" r="3" fill="#cfe8ff" stroke="#47a" /><path d="M14 9v4" strokeWidth="2" /></Svg>],
];

/* ---------- dialog ---------- */
const Dialog = styled.section`
  position: absolute;
  top: 130px;
  right: 23px;
  width: 623px;
  background: #f0f0f0;
  color: #000;
`;
const DialogHead = styled.div`
  display: flex;
  align-items: center;
  justify-content: space-between;
  height: 31px;
  padding: 0 10px 0 9px;
  background: #f3f3f3;
  color: #999;
`;
const DialogTitle = styled.h2`
  margin: 0;
  font-size: 12px;
  font-weight: 400;
`;
const DialogBody = styled.div`
  padding: 12px 12px 16px;
  border: solid #000;
  border-width: 0 1px 1px;
`;
const TypeRow = styled.div`
  display: flex;
  align-items: center;
  gap: 8px;
  font-size: 11px;
`;
const TypeLabel = styled.label`
  width: 61px;
  white-space: nowrap;
`;
const TypeIcons = styled.div`
  display: flex;
  gap: 12px;
  padding-right: 6px;
`;
const Search = styled.div`
  display: flex;
  align-items: center;
  height: 21px;
  margin: 11px 0 8px;
  padding: 0 0 0 2px;
  background: #fff;
  border-bottom: 1px solid #888;
`;
const SearchInput = styled.input`
  flex: 1;
  padding: 0;
  border: 0;
  background: none;
  outline: 0;
  font-size: 11px;
  &::placeholder { color: #666; opacity: 1; }
`;
const TableFrame = styled.div`
  border: solid #888;
  border-width: 2px 1px 2px 1px;
  border-right-color: #e4e4e4;
  border-bottom-color: #e4e4e4;
  background: #fff;
`;
const HeadCell = styled.th`
  height: 21px;
  padding: 0;
  border-right: 1px solid #000;
  border-bottom: 1px solid #000;
  background: #f0f0f0;
  font-weight: 400;
  line-height: 18px;
`;
const ParamGroup = styled.th`
  height: 22px;
  padding: 0 6px 0 2px;
  border-top: 3px solid #fff;
  background: #9ab3d0;
  font-weight: 700;
  line-height: 18px;
  text-align: left;
`;
const ParamCell = styled.td`
  height: ${(p) => p.$h || 18}px;
  padding: 0 0 0 ${(p) => (p.$tight ? 0 : 2)}px;
  border-right: 1px dotted #666;
  border-bottom: 1px dotted #666;
  line-height: 17px;
  white-space: nowrap;
  ${(p) => p.$focus && css`outline: 1px solid #000; outline-offset: -1px;`}
`;
const DialogTools = styled.div`
  display: flex;
  align-items: center;
  justify-content: space-between;
  margin-top: 10px;
  font-size: 11px;
`;
const ToolIcons = styled.div`
  display: flex;
  gap: 6px;
`;
const DialogFoot = styled.div`
  display: flex;
  align-items: flex-start;
  margin-top: 14px;
  font-size: 11px;
`;
const FootButtons = styled.div`
  display: flex;
  gap: 8px;
  margin-left: auto;
`;
const Grip = styled.span`
  position: absolute;
  right: 3px;
  bottom: 3px;
`;
const GripDots = () => <Svg s={8} stroke="none"><path d="M6 0h2v2H6zM3 3h2v2H3zM6 3h2v2H6zM0 6h2v2H0zM3 6h2v2H3zM6 6h2v2H6z" fill="#bbb" /></Svg>;

const params = [
  ["Constraints", [["Default Elevation", "1219.2", 1, 1]]],
  ["Materials and Finishes", [["Accent Material", "White Rendered Masonry Acce"], ["Hardware Material", "Black Powder-Coated Hinge Ha"], ["Post Material", "White Rendered Masonry Post -"], ["Slat Material", "Black Powder-Coated Steel Bar"]]],
  ["Dimensions", [["Height", "1829.0", 1], ["Width", "2438.0", 1]]],
  ["IFC Parameters", [["Type IFC Predefined Type", ""], ["Export Type to IFC As", ""]]],
  ["Identity Data", []],
];

const page = (c) => <path d="M5.500 5.500h6l4 4v8h-10zM11.500 5.500v4h4" fill="#fff" stroke={c} />;
const newIcon = <Svg s={18} stroke="#445">{page("#556")}<path d="M4.500 0v9M0 4.500h9M1.500 1.500l6 6M7.500 1.500l-6 6" stroke="#d2551a" /><circle cx="4.500" cy="4.500" r="1.500" fill="#ffe27a" stroke="none" /></Svg>;
const delIcon = <Svg s={18} stroke="#aaa">{page("#aaa")}<path d="M1 1l7 7M8 1L1 8" strokeWidth="2" strokeDasharray="1 1" /></Svg>;
const renameIcon = <Svg s={18}><path d="M1.500 2.500h15v13h-15z" fill="#fff" stroke="#445" /><path d="M3 4h8v10H3z" fill="#8ec5ee" stroke="none" /><path d="M4 13l3-8 3 8M5 10.500h4" stroke="#124a80" strokeWidth="1.500" /><path d="M12 4h3M13.500 4v10M12 14h3" stroke="#333" /></Svg>;
const az = (up) => <Svg w={18} h={20} stroke="#2a4a70"><text x="2" y="9" fontSize="9" fontWeight="700" fontFamily="Roboto" fill={up ? "#234" : "#4a80b8"} stroke="none">A</text><text x="2" y="19" fontSize="9" fontWeight="700" fontFamily="Roboto" fill={up ? "#4a80b8" : "#234"} stroke="none">Z</text><path d={up ? "M13.500 17V4M11 7l2.500-3L16 7" : "M13.500 4v13M11 14l2.500 3 2.500-3"} strokeWidth="1.500" /></Svg>;
const dTools = [
  ["Edit parameter", <Svg s={18} stroke="#444"><path d="M1.500 16.500l2-5L13 1.500l3.500 2.500L6 14.500z" fill="#e0b878" /><path d="M11 4l3.500 2.500L16.500 4 13 1.500z" fill="#777" /></Svg>],
  ["New parameter", newIcon],
  ["Shared parameter", <Svg s={18} stroke="#445"><path d="M2.500 1.500h8l3 3v11h-11z" fill="#fff" /><path d="M5 6h6M5 8.500h6M5 11h4" /><path d="M8 17a2.500 2.500 0 010-5 3.500 3.500 0 016-1 3 3 0 012 6z" fill="#dbe8fb" stroke="#2a5ac0" /></Svg>],
  ["Delete parameter", delIcon],
  ["Duplicate", <Svg s={18} stroke="#556"><path d="M11 3V1.500H1.500v12H5" /><path d="M5.500 3.500h7l4 4v9h-11zM12.500 3.500v4h4" fill="#f4f4f4" /></Svg>],
  ["Move up", <Svg s={18} stroke="#999"><path d="M5 16V4" strokeWidth="2" /><path d="M1 7l4-5 4 5z" fill="#999" stroke="none" /><path d="M17 2.500h-6v13h6M11 9h5" /></Svg>],
  ["Move down", <Svg s={18} stroke="#999"><path d="M5 2v11" strokeWidth="2" /><path d="M1 11l4 5 4-5z" fill="#999" stroke="none" /><path d="M17 2.500h-6v13h6M11 9h5" /></Svg>],
  null,
  ["Sort ascending", az(false)],
  ["Sort descending", az(true)],
];

/* ---------- status bar ---------- */
const Status = styled.footer`
  display: flex;
  align-items: center;
  justify-content: space-between;
  height: 24px;
  padding: 1px 6px 0 1px;
  background: #ccc;
  color: #000;
`;
const StatusTools = styled.div`
  display: flex;
  align-items: center;
  gap: 8px;
`;
const FilterCount = styled.span`
  display: flex;
  align-items: center;
  width: 94px;
  border-right: 1px solid #bbb;
`;
const G = "#a0a0a0";
const sIcons = [
  ["Select links", <path d="M1 3c2-3 5-2 7 0 3-3 7-2 9 1-2 4-4 2-6 4l2 8-3-1-1-6c-3 1-7-2-8-6z" fill={G} />],
  ["Select underlay", <path d="M1 14c3-6 6-11 10-12h6v14H8l-1-2z" fill={G} />],
  ["Select pinned", <path d="M4 1h8v8l5 6v2h-5l-2-5-6-1H1V8h3z" fill={G} />],
  ["Select by face", <path d="M2 2h14l-3 4 4 4-1 7H3V9L1 6z" fill={G} />],
  ["Drag elements", <path d="M5 1v9M1 5h9M10 8l7 7-3 1-2-2" stroke={G} strokeWidth="2" strokeDasharray="3 1" />],
  ["Background processes", <circle cx="9" cy="9" r="6" stroke={G} strokeWidth="3" strokeDasharray="3 1" />],
];

export default function App() {
  return (
    <Shell>
      <GlobalStyle />
      <TitleBar>
        <Quick>
          {quick.map((q, i) => q.rule ? <Rule key={i} $m={q.rule} /> : <QuickButton key={i} $w={q.w} $on={q.on} aria-label={q.n}>{q.d}</QuickButton>)}
        </Quick>
        <Title>Autodesk Revit 2023.1 - Bar Fence on Low Wall - Boracity.com.rfa - 3D View: boracity.com - Vista 1</Title>
        <WindowTools>
          <QuickButton $w={12} aria-label="Collapse search"><Svg w={4} h={8} stroke="none"><path d="M4 0v8L0 4z" fill="#333" /></Svg></QuickButton>
          <QuickButton $w={28} aria-label="Search"><Svg s={18} stroke="#223"><path d="M3.500 6l1-4h3v4M14.500 6l-1-4h-3v4M1.500 10l2-4h4v11h-6zM16.500 10l-2-4h-4v11h6zM7.500 8h3v3h-3zM1.500 13h6M10.500 13h6" fill="#ddd" /></Svg></QuickButton>
          <Space $w={118} />
          <QuickButton $w={26} aria-label="App store"><Svg s={18} stroke="#345"><path d="M1 2h3l2 9h9l1-6H5" fill="#e8eef4" /><path d="M6 11l-1 2.500h10" /><circle cx="7" cy="15.500" r="1" /><circle cx="14" cy="15.500" r="1" /></Svg></QuickButton>
          <Rule $m={4} />
          <QuickButton $w={26} aria-label="Help"><Svg s={18} stroke="#234"><circle cx="9" cy="9" r="7.500" fill="#fff" /><text x="9" y="14" textAnchor="middle" fontSize="13" fontWeight="700" fontFamily="Open Sans" fill="#1c4fb5" stroke="none">?</text></Svg></QuickButton>
          <QuickButton $w={10} aria-label="Help options"><Caret color="#444" /></QuickButton>
          <Space $w={56} />
          <QuickButton $w={24} aria-label="Minimize"><Svg s={12} stroke="#222"><path d="M2 10h8" strokeWidth="2" /></Svg></QuickButton>
          <QuickButton $w={25} aria-label="Restore"><Svg s={12} stroke="#222"><path d="M3.500 4V1.500h8v5H9M.5 5h8v5.500h-8z" /><path d="M3 2h9M0 5h9" strokeWidth="2" /></Svg></QuickButton>
          <QuickButton $w={24} aria-label="Close"><Svg s={12} stroke="#222"><path d="M1.500 1.500l9 9M10.500 1.500l-9 9" strokeWidth="2.500" /></Svg></QuickButton>
        </WindowTools>
      </TitleBar>
      <TabBar>
        {tabs.map(([t, w]) => <Tab key={t} $w={w} $file={t === "File"} $active={t === "Create"}>{t}</Tab>)}
        <CollapseButton aria-label="Minimize ribbon">
          <Svg w={15} h={9} stroke="#666"><rect x=".5" y=".5" width="14" height="8" rx="2" fill="#eee" /><path d="M4.500 6h6l-3-3.500z" fill="#444" stroke="none" /></Svg>
          <Caret color="#444" />
        </CollapseButton>
      </TabBar>
      <Ribbon>
        <Panel $pad={6}>
          <PanelBody><Tool $w={44} $on>{icons.modify}<span>Modify</span></Tool></PanelBody>
          <PanelTitle>Select <Caret color="#333" /></PanelTitle>
        </Panel>
        <Panel>
          <SmallGrid>
            <SmallTool aria-label="Type properties">{icons.types}</SmallTool>
            <SmallTool aria-label="Family category">{icons.category}</SmallTool>
            <SmallTool $on aria-label="Properties palette">{icons.props}</SmallTool>
            <SmallTool aria-label="Family types">{icons.ftypes}</SmallTool>
          </SmallGrid>
          <PanelTitle>Properties</PanelTitle>
        </Panel>
        {panels.map((p) => (
          <Panel key={p.t} $pad={p.pad} $last={p.last}>
            <PanelBody>
              {p.tools.map(([icon, w, a, b, caret]) => (
                <Tool key={icon} $w={w}>
                  {icons[icon]}
                  <span>{a}</span>
                  {b && <span>{b}</span>}
                  {caret === 1 && <ToolCaret><Svg w={5} h={3} stroke="none"><path d="M0 0h5L2.500 3z" fill="#555" /></Svg></ToolCaret>}
                  {caret === 2 && <BelowCaret><Svg w={5} h={3} stroke="none"><path d="M0 0h5L2.500 3z" fill="#555" /></Svg></BelowCaret>}
                </Tool>
              ))}
            </PanelBody>
            <PanelTitle $accent={p.accent}>{p.t}</PanelTitle>
          </Panel>
        ))}
      </Ribbon>
      <OptionsBar />

      <Workspace>
        <Side>
          <Palette>
            <PaletteTitle>Properties</PaletteTitle>
            <TypeBox>
              <Thumb>
                <Svg s={64} stroke="none">
                  <path d="M18 10h44v53H12l-4-5V20z" fill="#8a8a8a" />
                  <path d="M3 5L13 0v43L3 50z" fill="#bcbcbc" />
                  <path d="M13 0h41a3 3 0 013 3v40a3 3 0 01-3 3H13z" fill="#a8a8a8" />
                  <text x="35" y="34" textAnchor="middle" fontFamily="Open Sans" fontWeight="800" fontSize="32" fill="#fff">R</text>
                </Svg>
              </Thumb>
              <Caret color="#999" />
            </TypeBox>
            <FilterRow>
              <SelectWrap $w={133}>
                <Select aria-label="Family filter"><option>Family: Site</option></Select>
                <Chevron><Down /></Chevron>
              </SelectWrap>
              <EditType>
                <Svg s={17} stroke="#aaa"><path d="M1.500 2.500l1-1h5v6h-6zM9.500 2.500l1-1h5v6h-6zM1.500 10.500h6v5h-6z" /><path d="M9.500 8.500h6v8h-6z" fill="#eee" /><path d="M11 11h3M11 14h3" /></Svg>
                Edit Type
              </EditType>
            </FilterRow>
            <Grid>
              <colgroup><Col /><Col $w={107} /></colgroup>
              <tbody>
                {properties.map(([g, rows]) => (
                  <React.Fragment key={g}>
                    <tr><GroupHead colSpan={2}><GroupBar>{g}<Fold /></GroupBar></GroupHead></tr>
                    {rows.map(([k, v, o]) => (
                      <tr key={k}>
                        <PropCell $dim={o.dim}>{k}</PropCell>
                        <PropCell $value $focus={o.focus}>
                          {typeof v === "boolean" ? <Check type="checkbox" defaultChecked={v} aria-label={k} /> : v}
                        </PropCell>
                      </tr>
                    ))}
                  </React.Fragment>
                ))}
              </tbody>
            </Grid>
            <Filler />
            <PaletteFoot>
              <HelpLink href="#help">Properties help</HelpLink>
              <PushButton disabled $w={71} $h={20}>Apply</PushButton>
            </PaletteFoot>
          </Palette>
          <Palette $grow>
            <PaletteTitle $compact>Project Browser - Bar Fence on Low W...</PaletteTitle>
            <Tree>
              {tree.map((n, i) => (
                <Node key={i} $bold={n.bold}>
                  {n.c.map((k, j) => (
                    <Branch key={j} $kind={k} $short={!!n.i}>
                      {/[-+]$/.test(k) && <Expander $plus={k.endsWith("+")} aria-label={`Toggle ${n.t}`} />}
                    </Branch>
                  ))}
                  {n.i && <NodeIcon>{ti[n.i]}</NodeIcon>}
                  <NodeLabel $sel={n.sel} $deep={!n.i}>{n.t}</NodeLabel>
                </Node>
              ))}
            </Tree>
          </Palette>
        </Side>
        <ViewArea>
          <DocTabs>
            {docs.map(([t, w, icon], i) => (
              <DocTab key={i} $w={w} $active={i === 4}>
                {icon}{t}
                {i === 4 && <Svg s={12} stroke="#111"><path d="M2 2l8 8M10 2l-8 8" strokeWidth="2" /></Svg>}
              </DocTab>
            ))}
            <TabMenu aria-label="Open views"><Svg w={8} h={8}><path d="M0 1h8" strokeWidth="2" stroke="#333" /><path d="M0 3.500h8L4 8z" fill="#333" stroke="none" /></Svg></TabMenu>
          </DocTabs>
          <ViewFrame>
            <Canvas><Fence /><NavBar /></Canvas>
            <Gutter><Splitter $v /></Gutter>
          </ViewFrame>
          <ViewBar>
            <Scale>1 : 20</Scale>
            <ViewIcons>{vIcons.map(([n, d]) => <IconButton key={n} aria-label={n}>{d}</IconButton>)}</ViewIcons>
            <Push /><Splitter /><Push />
            <GripDots />
          </ViewBar>
          <ViewEnd />
        </ViewArea>
      </Workspace>

      <Status>
        <span>Ready</span>
        <StatusTools>
          {sIcons.map(([n, d]) => <IconButton key={n} $h={18} aria-label={n}><Svg s={18} stroke="none">{d}</Svg></IconButton>)}
          <FilterCount>
            <Svg s={18} stroke="#556"><path d="M1.500 1.500h15v2L11 9.500v7l-4-1.500V9.500L1.500 3.500z" fill="#c3ccd6" /></Svg>
            :0
          </FilterCount>
        </StatusTools>
      </Status>

      <Dialog aria-label="Family Types">
        <DialogHead>
          <DialogTitle>Family Types</DialogTitle>
          <IconButton $w={12} aria-label="Close"><Svg s={12} stroke="#888"><path d="M1 1l10 10M11 1L1 11" /></Svg></IconButton>
        </DialogHead>
        <DialogBody>
          <TypeRow>
            <TypeLabel htmlFor="type-name">T<u>y</u>pe name:</TypeLabel>
            <SelectWrap>
              <Select id="type-name"><option>Bar Fence on Low Wall 2438x1829x305 - Boracity.com</option></Select>
              <Chevron><Down /></Chevron>
            </SelectWrap>
            <TypeIcons>
              <IconButton $h={18} aria-label="New type">{newIcon}</IconButton>
              <IconButton $h={18} aria-label="Rename type">{renameIcon}</IconButton>
              <IconButton $h={18} aria-label="Delete type">{delIcon}</IconButton>
            </TypeIcons>
          </TypeRow>
          <Search>
            <SearchInput placeholder="Search parameters" aria-label="Search parameters" />
            <Svg s={18} stroke="#556"><path d="M10 11l5.500 5.500" strokeWidth="3" /><circle cx="7" cy="6.500" r="5" fill="#d5f0f5" /></Svg>
          </Search>
          <TableFrame>
            <Grid>
              <colgroup><Col $w={181} /><Col $w={184} /><Col /><Col $w={39} /></colgroup>
              <thead>
                <tr><HeadCell>Parameter</HeadCell><HeadCell>Value</HeadCell><HeadCell>Formula</HeadCell><HeadCell>Lock</HeadCell></tr>
              </thead>
              <tbody>
                {params.map(([g, rows]) => (
                  <React.Fragment key={g}>
                    <tr><ParamGroup colSpan={4}><GroupBar>{g}<Fold down={!rows.length} /></GroupBar></ParamGroup></tr>
                    {rows.map(([k, v, lock, focus]) => (
                      <tr key={k}>
                        <ParamCell>{k}</ParamCell>
                        <ParamCell $focus={focus}>{v}</ParamCell>
                        <ParamCell $tight>=</ParamCell>
                        <ParamCell>{lock && <Check type="checkbox" aria-label={`Lock ${k}`} />}</ParamCell>
                      </tr>
                    ))}
                  </React.Fragment>
                ))}
                <tr><ParamCell $h={236} /><ParamCell /><ParamCell /><ParamCell /></tr>
              </tbody>
            </Grid>
          </TableFrame>
          <DialogTools>
            <ToolIcons>
              {dTools.map((t, i) => t ? <IconButton key={i} $w={24} $h={18} aria-label={t[0]}>{t[1]}</IconButton> : <Space key={i} $w={8} />)}
            </ToolIcons>
            <PushButton $w={124}>Manage Lookup Tables</PushButton>
          </DialogTools>
          <DialogFoot>
            <HelpLink href="#family-types">How do I manage family types?</HelpLink>
            <FootButtons>
              <PushButton>OK</PushButton>
              <PushButton>Cancel</PushButton>
              <PushButton><u>A</u>pply</PushButton>
            </FootButtons>
          </DialogFoot>
        </DialogBody>
        <Grip><GripDots /></Grip>
      </Dialog>
    </Shell>
  );
}
